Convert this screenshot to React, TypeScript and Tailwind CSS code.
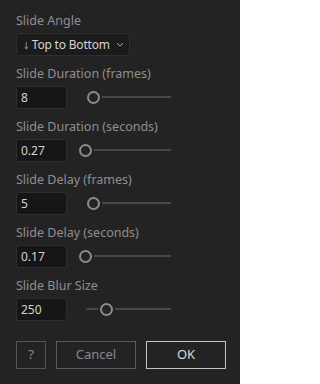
import React from "react";

const FONT = { fontFamily: '"Noto Sans", "Open Sans", sans-serif' };

function Label({ text }: { text: string }) {
  return <div className="h-4 text-[12.5px] leading-4 text-[#8f8f8f] mb-1 whitespace-nowrap">{text}</div>;
}

function Slider({ start, thumb }: { start: number; thumb: number }) {
  const width = 171 - start;
  const left = thumb - start;
  return (
    <div className="relative h-[23px]" style={{ marginLeft: start - 67, width }}>
      <div className="absolute left-0 right-0 top-[10px] h-[2px] bg-[#484848]" />
      <div
        className="absolute top-[5px] w-[13px] h-[13px] rounded-full border-2 border-[#8c8c8c] bg-[#232323] ring-2 ring-[#232323]"
        style={{ left: left - 6.5 }}
      />
    </div>
  );
}

function NumRow({ label, value, start, thumb }: { label: string; value: string; start: number; thumb: number }) {
  return (
    <div>
      <Label text={label} />
      <div className="flex items-center">
        <div className="w-[51px] h-[23px] rounded-[2px] border border-[#2e2e2e] bg-[#161616] text-[12px] leading-[21px] pl-[4px] text-[#d2d2d2]">
          {value}
        </div>
        <Slider start={start} thumb={thumb} />
      </div>
    </div>
  );
}

export default function App() {
  return (
    <div className="w-[240px] h-[384px] bg-[#232323] pt-[13px] pl-[16px]" style={FONT}>
      <div className="flex flex-col gap-[10px]">
        <div>
          <Label text="Slide Angle" />
          <div className="w-[114px] h-[23px] rounded-[3px] border border-[#2e2e2e] bg-[#1b1b1b] flex items-center pl-[6px] pr-[5px] text-[#d4d4d4] text-[12px] tracking-[-0.2px] whitespace-nowrap">
            <span className="mr-[3px]">↓</span>
            <span>Top to Bottom</span>
            <svg className="ml-auto shrink-0" width="8" height="5" viewBox="0 0 8 5">
              <path d="M1 1 L4 4 L7 1" fill="none" stroke="#a0a0a0" strokeWidth="1" />
            </svg>
          </div>
        </div>
        <NumRow label="Slide Duration (frames)" value="8" start={86} thumb={93} />
        <NumRow label="Slide Duration (seconds)" value="0.27" start={78} thumb={85} />
        <NumRow label="Slide Delay (frames)" value="5" start={86} thumb={93} />
        <NumRow label="Slide Delay (seconds)" value="0.17" start={78} thumb={85} />
        <NumRow label="Slide Blur Size" value="250" start={86} thumb={106} />
      </div>
      <div className="flex mt-[20px] gap-[10px] text-[13px]">
        <div className="w-[30px] h-[28px] border border-[#555555] flex items-center justify-center text-[#8a8a8a]">?</div>
        <div className="w-[80px] h-[28px] border border-[#5a5a5a] flex items-center justify-center text-[#8a8a8a]">Cancel</div>
        <div className="w-[80px] h-[28px] border border-[#c4c4c4] flex items-center justify-center text-[#dcdcdc]">OK</div>
      </div>
    </div>
  );
}
